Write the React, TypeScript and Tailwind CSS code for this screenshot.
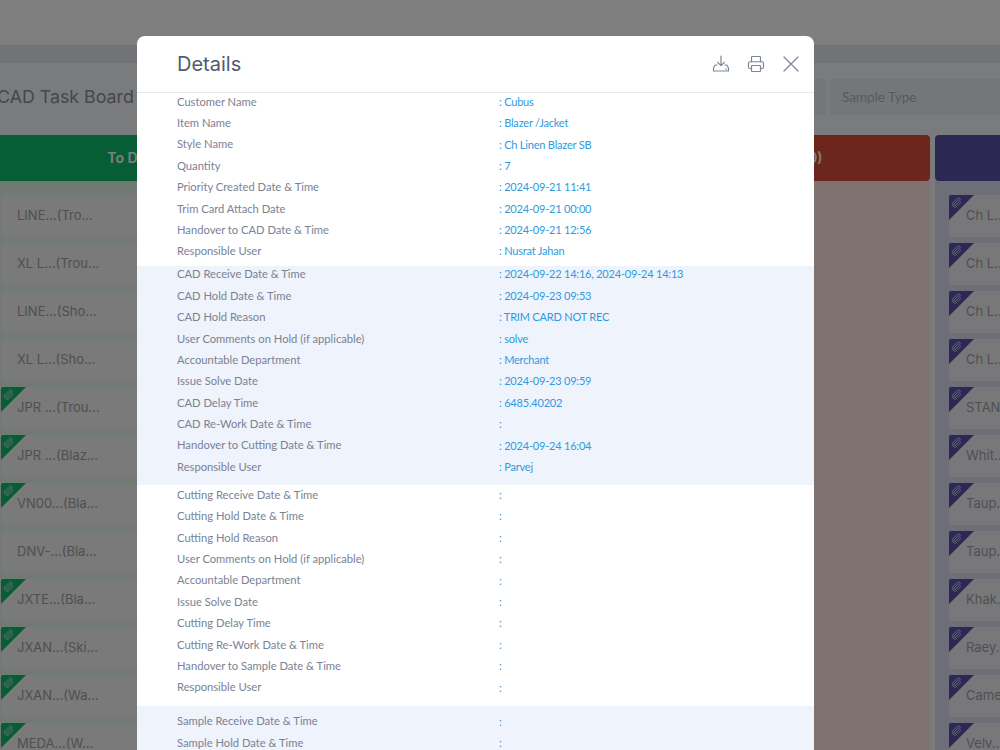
import { Printer, Paperclip } from 'lucide-react';

type Row = [string, string];

const sectionOne: Row[] = [
  ['Customer Name', ': Cubus'],
  ['Item Name', ': Blazer /Jacket'],
  ['Style Name', ': Ch Linen Blazer SB'],
  ['Quantity', ': 7'],
  ['Priority Created Date & Time', ': 2024-09-21 11:41'],
  ['Trim Card Attach Date', ': 2024-09-21 00:00'],
  ['Handover to CAD Date & Time', ': 2024-09-21 12:56'],
  ['Responsible User', ': Nusrat Jahan'],
];

const sectionTwo: Row[] = [
  ['CAD Receive Date & Time', ': 2024-09-22 14:16, 2024-09-24 14:13'],
  ['CAD Hold Date & Time', ': 2024-09-23 09:53'],
  ['CAD Hold Reason', ': TRIM CARD NOT REC'],
  ['User Comments on Hold (if applicable)', ': solve'],
  ['Accountable Department', ': Merchant'],
  ['Issue Solve Date', ': 2024-09-23 09:59'],
  ['CAD Delay Time', ': 6485.40202'],
  ['CAD Re-Work Date & Time', ':'],
  ['Handover to Cutting Date & Time', ': 2024-09-24 16:04'],
  ['Responsible User', ': Parvej'],
];

const sectionThree: Row[] = [
  ['Cutting Receive Date & Time', ':'],
  ['Cutting Hold Date & Time', ':'],
  ['Cutting Hold Reason', ':'],
  ['User Comments on Hold (if applicable)', ':'],
  ['Accountable Department', ':'],
  ['Issue Solve Date', ':'],
  ['Cutting Delay Time', ':'],
  ['Cutting Re-Work Date & Time', ':'],
  ['Handover to Sample Date & Time', ':'],
  ['Responsible User', ':'],
];

const sectionFour: Row[] = [
  ['Sample Receive Date & Time', ':'],
  ['Sample Hold Date & Time', ':'],
  ['Sample Hold Reason', ':'],
];

const todoCards = [
  { name: 'LINE...(Tro...', clip: false },
  { name: 'XL L...(Trou...', clip: false },
  { name: 'LINE...(Sho...', clip: false },
  { name: 'XL L...(Sho...', clip: false },
  { name: 'JPR ...(Trou...', clip: true },
  { name: 'JPR ...(Blaz...', clip: true },
  { name: 'VN00...(Bla...', clip: true },
  { name: 'DNV-...(Bla...', clip: false },
  { name: 'JXTE...(Bla...', clip: true },
  { name: 'JXAN...(Ski...', clip: true },
  { name: 'JXAN...(Wa...', clip: true },
  { name: 'MEDA...(W...', clip: true },
];

const doneCards = ['Ch L...', 'Ch L...', 'Ch L...', 'Ch L...', 'STAN...', 'Whit...', 'Taup...', 'Taup...', 'Khak...', 'Raey...', 'Came...', 'Velv...'];

function Corner({ color }: { color: string }) {
  return (
    <span className="absolute left-0 top-0 h-[25px] w-[25px]">
      <svg viewBox="0 0 25 25" className="h-full w-full">
        <path d="M2 0H25L0 25V2a2 2 0 0 1 2-2z" fill={color} />
      </svg>
      <Paperclip className="absolute left-[2px] top-[2px] h-[11px] w-[11px] text-[#d8d8ee]" />
    </span>
  );
}

function DetailRows({ rows, className }: { rows: Row[]; className: string }) {
  return (
    <div className={`flex flex-col gap-[3.4px] pl-10 ${className}`}>
      {rows.map((r, i) => (
        <div key={i} className="flex h-[18px] items-center">
          <div className="w-[322px] text-[11.2px] text-[#7a8294]">{r[0]}</div>
          <div className="text-[11px] tracking-[-0.2px] text-[#2f9ae0]">{r[1]}</div>
        </div>
      ))}
    </div>
  );
}

export default function App() {
  return (
    <div className="relative h-[750px] w-[1000px] overflow-hidden bg-[#f5f6fa] font-['Inter',sans-serif]">
      <div className="h-[45px] bg-white" />
      <div className="h-[18px] bg-[#e4e7ec]" />

      <div className="ml-[-13px] w-[1300px] pt-4">
        <div className="flex h-9 items-center pl-[10px]">
          <div className="w-[663px] flex-none text-[17.8px] font-normal text-[#8a8c9e]">CAD Task Board</div>
          <div className="mr-[4px] h-9 w-[166px] rounded bg-[#e9ecf2]" />
          <div className="flex h-9 w-[200px] items-center rounded bg-[#e9ecf2] px-3 font-['Lato',sans-serif] text-[13.5px] text-[#b0b4bf]">Sample Type</div>
        </div>

        <div className="mt-5 flex gap-[5px]">
          <div className="w-[311px] shrink-0">
            <div className="flex h-[46px] items-center justify-center rounded bg-[#0fbc6c] text-sm font-semibold text-white">To Do (52)</div>
            <div className="flex flex-col gap-[6px] bg-[#e0f2e8] px-[14px] pt-[14px]">
              {todoCards.map((c, i) => (
                <div key={i} className="relative flex h-[42px] items-center rounded bg-[#f2f4f2] pl-[16px] text-[13px] text-[#a0a0a0]">
                  {c.clip && <Corner color="#0fbc6c" />}
                  <span>{c.name}</span>
                </div>
              ))}
            </div>
          </div>

          <div className="w-[311px] shrink-0">
            <div className="h-[46px] rounded bg-[#3b82f6]" />
          </div>

          <div className="w-[311px] shrink-0">
            <div className="flex h-[46px] items-center justify-center rounded bg-[#d84c38] text-sm font-semibold text-white">CAD Holds (0)</div>
            <div className="h-[600px] bg-[#ffe6e0]" />
          </div>

          <div className="w-[311px] shrink-0">
            <div className="h-[46px] rounded bg-[#5a50a6]" />
            <div className="flex flex-col gap-[6px] bg-[#dcdcf0] px-[14px] pt-[14px]">
              {doneCards.map((c, i) => (
                <div key={i} className="relative flex h-[42px] items-center rounded bg-[#f0f0f6] pl-[17px] text-[13px] text-[#a0a0a0]">
                  <Corner color="#5a50a6" />
                  <span>{c}</span>
                </div>
              ))}
            </div>
          </div>
        </div>
      </div>

      <div className="absolute inset-0 bg-black/50" />

      <div className="absolute left-[137px] top-9 h-[760px] w-[677px] overflow-hidden rounded-lg bg-white">
        <div className="flex h-[57px] items-center border-b border-[#e5e7eb] pb-px pl-10 pr-[15px]">
          <div className="flex-1 text-xl text-[#4f5b73]">Details</div>
          <svg viewBox="0 0 18 18" fill="none" stroke="#7c879c" strokeWidth="1.2" strokeLinecap="round" strokeLinejoin="round" className="mr-[17px] h-[18px] w-[18px]">
            <path d="M9 1v9.500M5.800 7.500 9 10.700l3.200-3.200" />
            <path d="M5 10H3.200L1.500 13v3h15v-3L14.800 10H13" />
            <path d="M13.500 14h.8" />
          </svg>
          <Printer className="mr-[18px] h-[18px] w-[18px] text-[#7c879c]" strokeWidth={1.6} />
          <svg viewBox="0 0 16 16" fill="none" stroke="#7c879c" strokeWidth="1.300" strokeLinecap="round" className="h-4 w-4">
            <path d="M1 1 15 15M15 1 1 15" />
          </svg>
        </div>
        <div className="font-['Lato',sans-serif]">
          <DetailRows rows={sectionOne} className="pb-[5px]" />
          <DetailRows rows={sectionTwo} className="bg-[#eff3fb] pb-[9px]" />
          <DetailRows rows={sectionThree} className="pb-[9px] pt-px" />
          <DetailRows rows={sectionFour} className="bg-[#eff3fb] pt-[7px]" />
        </div>
      </div>
    </div>
  );
}
